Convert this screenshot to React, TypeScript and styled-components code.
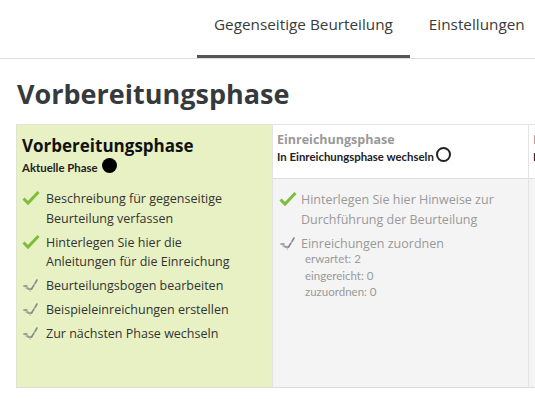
import React from "react";
import styled, { createGlobalStyle } from "styled-components";

const Global = createGlobalStyle`
  html, body { margin: 0; padding: 0; background: #fff; }
  body { font-family: "Open Sans", "Noto Sans", sans-serif; color: #333; overflow: hidden; }
  * { box-sizing: border-box; }
`;

const Page = styled.div`
  width: 535px;
  height: 399px;
  overflow: hidden;
`;

const Nav = styled.nav`
  display: flex;
  padding-left: 197px;
  border-bottom: 1px solid #dedede;
  white-space: nowrap;
  height: 59px;
`;

const Tab = styled.div<{ $active?: boolean }>`
  padding: 14px 17px 0;
  font-size: 15.3px;
  color: #3a3a3a;
  border-bottom: 3px solid ${(p) => (p.$active ? "#555" : "transparent")};
  margin-right: 2px;
  flex-shrink: 0;
`;

const Title = styled.h2`
  margin: 15px 0 0 17px;
  font-size: 27px;
  font-weight: 700;
  color: #373a3c;
  line-height: 40px;
  height: 43px;
`;

const Phases = styled.div`
  display: flex;
  margin: 7px 0 0 16px;
  height: 264px;
  border-top: 1px solid #e3e3e3;
  border-bottom: 1px solid #dcdcdc;
  width: 700px;
`;

const Column = styled.div<{ $active?: boolean }>`
  width: 256px;
  flex-shrink: 0;
  display: flex;
  flex-direction: column;
  background: ${(p) => (p.$active ? "#e7f1c3" : "#f4f4f4")};
  border-left: 1px solid ${(p) => (p.$active ? "#e0e6cc" : "#e3e3e3")};
`;

const Header = styled.div<{ $active?: boolean }>`
  height: ${(p) => (p.$active ? "auto" : "54px")};
  background: ${(p) => (p.$active ? "transparent" : "#fff")};
  border-bottom: ${(p) => (p.$active ? "none" : "1px solid #dedede")};
  padding: ${(p) => (p.$active ? "9px 5px 0" : "6px 4px 0")};
`;

const PhaseName = styled.div<{ $active?: boolean }>`
  font-weight: 700;
  font-size: ${(p) => (p.$active ? "17px" : "12.5px")};
  line-height: ${(p) => (p.$active ? "24px" : "18px")};
  color: ${(p) => (p.$active ? "#111" : "#999")};
  margin-bottom: ${(p) => (p.$active ? "2px" : "0")};
`;

const PhaseAction = styled.div`
  display: flex;
  align-items: center;
  font-family: "Lato", "Open Sans", sans-serif;
  font-weight: 700;
  font-size: 11.4px;
  color: #222;
  line-height: 16px;
`;

const Dot = styled.span<{ $filled?: boolean }>`
  display: inline-block;
  width: 15px;
  height: 15px;
  border-radius: 50%;
  margin-left: ${(p) => (p.$filled ? "4px" : "2px")};
  background: ${(p) => (p.$filled ? "#000" : "transparent")};
  border: ${(p) => (p.$filled ? "none" : "2px solid #222")};
  position: relative;
  top: -3px;
`;

const Tasks = styled.ul<{ $active?: boolean }>`
  list-style: none;
  margin: 0;
  padding: ${(p) => (p.$active ? "13px 28px 0 5px" : "11px 22px 0 6px")};
`;

const Task = styled.li<{ $muted?: boolean }>`
  display: flex;
  align-items: flex-start;
  gap: ${(p) => (p.$muted ? "4px" : "6px")};
  font-size: 12.5px;
  line-height: 19.5px;
  color: ${(p) => (p.$muted ? "#999" : "#333")};
  margin-bottom: 4.5px;
`;

const IconBox = styled.span`
  width: 18px;
  height: 18px;
  flex-shrink: 0;
  display: flex;
  align-items: center;
  justify-content: center;
`;

const Details = styled.div`
  font-family: "Lato", "Open Sans", sans-serif;
  font-size: 11.5px;
  line-height: 16.5px;
  color: #999;
  padding-left: 4px;
  margin-top: -2px;
`;

const Done = () => (
  <IconBox>
    <svg width="18" height="16" viewBox="0 0 18 16">
      <path d="M1.5 8.5 L6 13 L16.5 2" fill="none" stroke="#7ebd3a" strokeWidth="3" strokeLinejoin="miter" />
    </svg>
  </IconBox>
);

const Todo = () => (
  <IconBox>
    <svg width="18" height="16" viewBox="0 0 18 16">
      <g stroke="#888" strokeWidth="1.6" fill="none" strokeLinecap="round">
        <path d="M2 9 L5 9" />
        <path d="M6 12 L9.5 12" />
        <path d="M9.5 12 L12 8" />
        <path d="M13 6.5 L15 3" />
        <path d="M4 11 L6 11" opacity="0.7" />
      </g>
      <path d="M7.5 14 L9 14" stroke="#aaa" strokeWidth="1.2" />
    </svg>
  </IconBox>
);

export default function App() {
  return (
    <Page>
      <Global />
      <Nav>
        <Tab $active>Gegenseitige Beurteilung</Tab>
        <Tab>Einstellungen</Tab>
      </Nav>
      <Title>Vorbereitungsphase</Title>
      <Phases>
        <Column $active>
          <Header $active>
            <PhaseName $active>Vorbereitungsphase</PhaseName>
            <PhaseAction>
              Aktuelle Phase <Dot $filled />
            </PhaseAction>
          </Header>
          <Tasks $active>
            <Task>
              <Done />
              <span>Beschreibung für gegenseitige Beurteilung verfassen</span>
            </Task>
            <Task>
              <Done />
              <span>Hinterlegen Sie hier die Anleitungen für die Einreichung</span>
            </Task>
            <Task>
              <Todo />
              <span>Beurteilungsbogen bearbeiten</span>
            </Task>
            <Task>
              <Todo />
              <span>Beispieleinreichungen erstellen</span>
            </Task>
            <Task>
              <Todo />
              <span>Zur nächsten Phase wechseln</span>
            </Task>
          </Tasks>
        </Column>
        <Column>
          <Header>
            <PhaseName>Einreichungsphase</PhaseName>
            <PhaseAction>
              In Einreichungsphase wechseln<Dot />
            </PhaseAction>
          </Header>
          <Tasks>
            <Task $muted>
              <Done />
              <span>Hinterlegen Sie hier Hinweise zur Durchführung der Beurteilung</span>
            </Task>
            <Task $muted>
              <Todo />
              <div>
                <span>Einreichungen zuordnen</span>
                <Details>
                  erwartet: 2<br />
                  eingereicht: 0<br />
                  zuzuordnen: 0
                </Details>
              </div>
            </Task>
          </Tasks>
        </Column>
        <Column>
          <Header>
            <PhaseName>Beurteilungsphase</PhaseName>
            <PhaseAction>In Beurteilungsphase wechseln<Dot /></PhaseAction>
          </Header>
        </Column>
      </Phases>
    </Page>
  );
}
